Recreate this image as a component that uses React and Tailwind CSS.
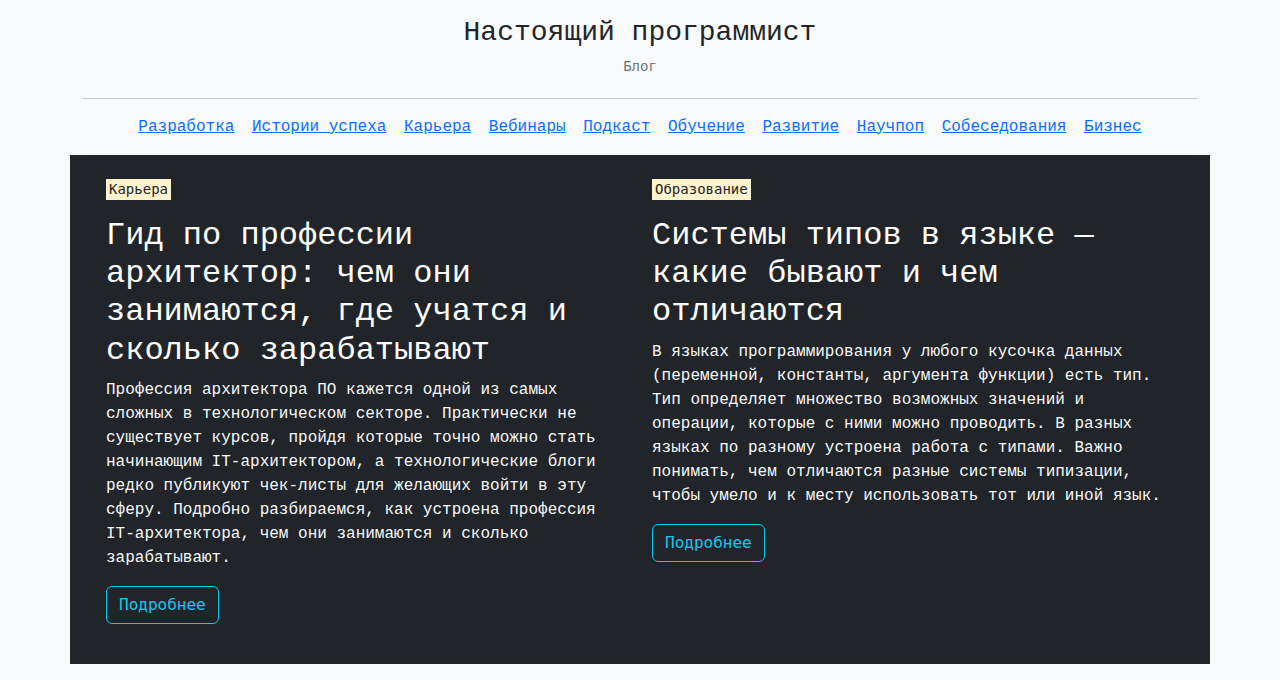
import React from 'react';

const links = ['Разработка', 'Истории успеха', 'Карьера', 'Вебинары', 'Подкаст', 'Обучение', 'Развитие', 'Научпоп', 'Собеседования', 'Бизнес'];

const posts = [
    {
        tag: 'Карьера',
        title: 'Гид по профессии архитектор: чем они занимаются, где учатся и сколько зарабатывают',
        text: 'Профессия архитектора ПО кажется одной из самых сложных в технологическом секторе. Практически не существует курсов, пройдя которые точно можно стать начинающим IT-архитектором, а технологические блоги редко публикуют чек-листы для желающих войти в эту сферу. Подробно разбираемся, как устроена профессия IT-архитектора, чем они занимаются и сколько зарабатывают.'
    },
    {
        tag: 'Образование',
        title: 'Системы типов в языке — какие бывают и чем отличаются',
        text: 'В языках программирования у любого кусочка данных (переменной, константы, аргумента функции) есть тип. Тип определяет множество возможных значений и операции, которые с ними можно проводить. В разных языках по разному устроена работа с типами. Важно понимать, чем отличаются разные системы типизации, чтобы умело и к месту использовать тот или иной язык.'
    }
];

const App = () => {
    return (
        <div className="min-h-[680px] bg-[#f8f9fa] font-[family-name:'Liberation_Mono','Courier_New',monospace] text-[#212529]">
            {/* Header */}
            <header className="pt-[16px] text-center">
                <h1 className="text-[28px] leading-[33.6px]">Настоящий программист</h1>
                <p className="mt-[6px] text-[14px] leading-[21px] text-[#6c757d] font-[family-name:'DejaVu_Sans_Mono',monospace]">Блог</p>
            </header>
            <div className="mx-[82px] mt-[21px] border-t border-[#c8cacc]"></div>

            <nav className="flex justify-center gap-[17.6px] pt-[16px] pb-[16px]">
                {links.map((l) => (
                    <a key={l} href="#" className="text-[16px] leading-6 text-[#0d6efd] underline">{l}</a>
                ))}
            </nav>

            {/* Featured posts */}
            <div className="mx-[70px] bg-[#212529] px-[36px] pt-6 pb-10">
                <div className="grid grid-cols-[510px_522px] gap-[36px]">
                    {posts.map((p) => (
                        <div key={p.tag}>
                            <span className="block w-fit h-[21px] px-[3px] bg-[#fff3cd] text-[#212529] text-[14px] leading-[21px] font-[family-name:'DejaVu_Sans_Mono',monospace]">{p.tag}</span>
                            <h2 className="mt-[17px] text-[32px] leading-[38.4px] text-white">{p.title}</h2>
                            <p className="mt-2 text-[16px] leading-6 text-[#f8f9fa]">{p.text}</p>
                            <button className="mt-[16px] h-[38px] px-3 border border-[#0dcaf0] rounded-md text-[#0dcaf0] text-[16px] font-[family-name:'DejaVu_Sans_Mono',monospace]">Подробнее</button>
                        </div>
                    ))}
                </div>
            </div>
        </div>
    );
};

export default App;
